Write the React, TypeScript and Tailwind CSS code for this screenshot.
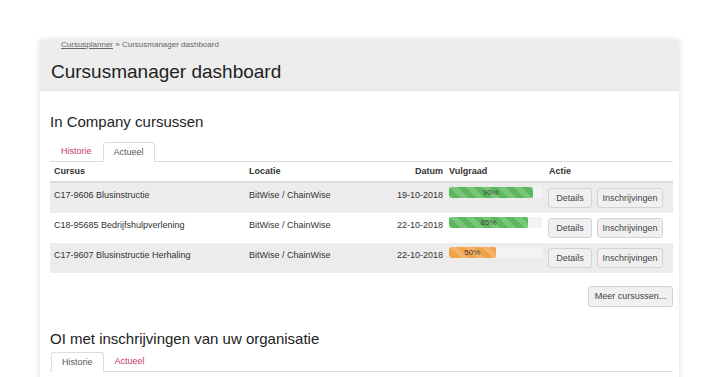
import React from 'react';

type Course = {
  code: string;
  location: string;
  date: string;
  fill: number;
  color: 'green' | 'orange';
};

const COURSES: Course[] = [
  { code: 'C17-9606 Blusinstructie', location: 'BitWise / ChainWise', date: '19-10-2018', fill: 90, color: 'green' },
  { code: 'C18-95685 Bedrijfshulpverlening', location: 'BitWise / ChainWise', date: '22-10-2018', fill: 85, color: 'green' },
  { code: 'C17-9607 Blusinstructie Herhaling', location: 'BitWise / ChainWise', date: '22-10-2018', fill: 50, color: 'orange' },
];

const cols = 'grid grid-cols-[195px_132px_70px_98px_128px]';

const Tabs: React.FC<{ active: 'Historie' | 'Actueel' }> = ({ active }) => (
  <div className="flex h-[20px] border-b border-[#dddddd] pl-[1px]">
    {(['Historie', 'Actueel'] as const).map(t =>
      t === active ? (
        <span
          key={t}
          className="mr-[1px] -mb-px flex h-[20px] items-center rounded-t-[3px] border border-b-0 border-[#dddddd] bg-white px-[10px] text-[#555555]"
        >
          {t}
        </span>
      ) : (
        <span key={t} className="mr-[1px] flex h-[19px] items-center px-[10px] text-[#c33a5e]">
          {t}
        </span>
      )
    )}
  </div>
);

const Btn: React.FC<{ children: React.ReactNode; className?: string }> = ({ children, className = '' }) => (
  <span
    className={`flex h-[20px] items-center justify-center whitespace-nowrap rounded-[3px] border border-[#d2d2d2] bg-[#f0f0f0] text-[#444444] ${className}`}
  >
    {children}
  </span>
);

export default function App() {
  return (
    <div className="h-[377px] overflow-hidden bg-white pt-[40px] font-['Liberation_Sans',Arial,sans-serif] text-[9px] text-[#333333]">
      <div className="ml-[40px] h-[400px] w-[639px] bg-white shadow-[0_0_6px_rgba(0,0,0,0.14)]">
        {/* page header */}
        <div className="h-[51px] border-b border-[#e2e2e2] bg-[#ededed] pl-[11px]">
          <div className="h-[10px] pl-[10px] text-[8px] leading-[10px] text-[#666666]">
            <span className="underline">Cursusplanner</span> » Cursusmanager dashboard
          </div>
          <h1 className="mt-[11px] text-[19px] leading-[22px] text-[#222222]">Cursusmanager dashboard</h1>
        </div>

        <div className="pl-[10px] pr-[6px]">
          {/* In Company */}
          <h2 className="pt-[22px] text-[15px] leading-[18px] text-[#222222]">In Company cursussen</h2>
          <div className="mt-[11px]">
            <Tabs active="Actueel" />
          </div>

          <div className={`${cols} h-[21px] items-center border-b-2 border-[#dddddd] font-bold`}>
            <span className="pl-[4px]">Cursus</span>
            <span className="pl-[4px]">Locatie</span>
            <span className="pr-[4px] text-right">Datum</span>
            <span className="pl-[2px]">Vulgraad</span>
            <span className="pl-[4px]">Actie</span>
          </div>

          {COURSES.map((c, i) => (
            <div key={c.code} className={`${cols} h-[30px] pt-[4px] leading-[12px] ${i % 2 === 0 ? 'bg-[#ececec]' : 'bg-white'}`}>
              <span className="whitespace-nowrap pl-[4px] pt-[2px]">{c.code}</span>
              <span className="whitespace-nowrap pl-[4px] pt-[2px]">{c.location}</span>
              <span className="whitespace-nowrap pr-[4px] pt-[2px] text-right">{c.date}</span>
              <div className="pl-[2px]">
                <div className="h-[11px] w-[93px] overflow-hidden rounded-[2px] bg-[#f3f3f3]">
                  <div
                    className={`flex h-full items-center justify-center rounded-[2px] bg-[linear-gradient(45deg,rgba(255,255,255,.18)_25%,transparent_25%,transparent_50%,rgba(255,255,255,.18)_50%,rgba(255,255,255,.18)_75%,transparent_75%,transparent)] bg-[length:16px_16px] text-[8px] leading-none text-[#3d3d3d] ${
                      c.color === 'green' ? 'bg-[#5cb85c]' : 'bg-[#f0a346]'
                    }`}
                    style={{ width: `${c.fill}%` }}
                  >
                    {c.fill}%
                  </div>
                </div>
              </div>
              <div className="flex gap-[5px] pl-[3px] pt-[1px]">
                <Btn className="w-[44px]">Details</Btn>
                <Btn className="w-[66px]">Inschrijvingen</Btn>
              </div>
            </div>
          ))}

          <div className="mt-[13px] flex justify-end">
            <Btn className="h-[21px] w-[85px]">Meer cursussen...</Btn>
          </div>

          {/* OI */}
          <h2 className="mt-[23px] text-[15px] leading-[18px] text-[#222222]">OI met inschrijvingen van uw organisatie</h2>
          <div className="mt-[4px]">
            <Tabs active="Historie" />
          </div>
        </div>
      </div>
    </div>
  );
}
